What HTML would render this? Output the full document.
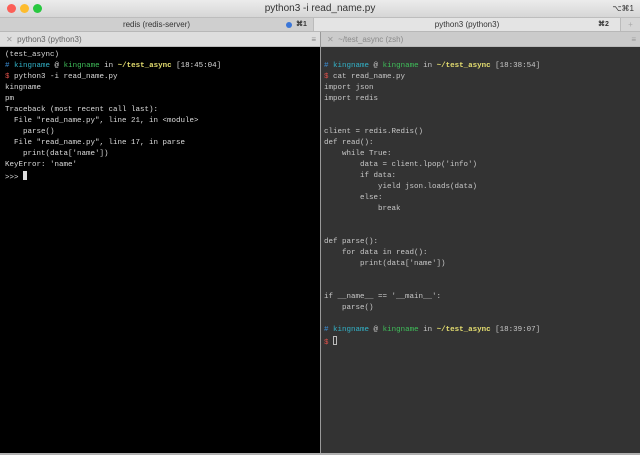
<!DOCTYPE html>
<html><head><style>
*{margin:0;padding:0;box-sizing:border-box}
body{width:640px;height:455px;overflow:hidden;background:#c8c8c8;font-family:"Liberation Sans",sans-serif;position:relative}
.title{position:absolute;left:0;top:0;width:640px;height:17px;background:linear-gradient(#ececec,#d6d6d6);font-size:10px;color:#333;text-align:center;line-height:17px}
.dot{position:absolute;top:4px;width:9px;height:9px;border-radius:50%}
.tabs{position:absolute;top:17px;left:0;width:640px;height:15px;background:#d3d3d3;border-top:1px solid #bdbdbd;border-bottom:1px solid #b8b8b8;font-size:8px;color:#333;line-height:13px}
.tab{position:absolute;top:0;height:13px;text-align:center}
.ph{position:absolute;top:32px;height:15px;background:#dadada;font-size:8px;line-height:15px;color:#666;border-bottom:1px solid #bbb}
.pane{position:absolute;top:47px;height:406px;font-family:"Liberation Mono",monospace;font-size:7.5px;line-height:11px;white-space:pre;padding:3px 0 0 5px}
.l{background:#000;color:#dcdcdc;left:0;width:320px}
.r{background:#333;color:#c8c8c8;left:321px;width:319px;padding-left:3px}
.b{color:#3b8fd6}.c{color:#32b3c9}.g{color:#3fbf5a}.y{color:#e6df70;font-weight:bold}.rd{color:#e0504a}
.cur{display:inline-block;width:4px;height:9px;background:#ddd;vertical-align:-1px}
</style></head><body>
<div class="title">python3 -i read_name.py
<div class="dot" style="left:7px;background:#fc5f57"></div><div class="dot" style="left:20px;background:#fdbc2e"></div><div class="dot" style="left:33px;background:#28c840"></div>
<span style="position:absolute;right:6px;top:0;font-size:8px">⌥⌘1</span></div>
<div class="tabs">
<div class="tab" style="left:0;width:313px;background:#cfcfcf">redis (redis-server)<span style="position:absolute;left:286px;top:4px;width:6px;height:6px;border-radius:50%;background:#3a76d8"></span><span style="position:absolute;left:296px;font-weight:bold;font-size:7px">⌘1</span></div>
<div class="tab" style="left:313px;width:307px;background:#e4e4e4;border-left:1px solid #bbb">python3 (python3)<span style="position:absolute;left:284px;font-weight:bold;font-size:7px">⌘2</span></div>
<div class="tab" style="left:620px;width:20px;background:#d6d6d6;color:#aaa;border-left:1px solid #bbb">+</div>
</div>
<div class="ph" style="left:0;width:320px;background:#dedede"><span style="margin-left:6px;color:#999">✕</span>&nbsp;&nbsp;python3 (python3)<span style="position:absolute;right:4px;color:#888">≡</span></div>
<div class="ph" style="left:321px;width:319px;background:#cbcbcb;color:#8a8a8a"><span style="margin-left:6px;color:#999">✕</span>&nbsp;&nbsp;~/test_async (zsh)<span style="position:absolute;right:4px;color:#999">≡</span></div>
<div style="position:absolute;left:320px;top:32px;width:1px;height:423px;background:#999"></div>
<div class="pane l">(test_async)
<span class="b">#</span> <span class="c">kingname</span> @ <span class="g">kingname</span> in <span class="y">~/test_async</span> [18:45:04]
<span class="rd">$</span> python3 -i read_name.py
kingname
pm
Traceback (most recent call last):
  File "read_name.py", line 21, in &lt;module&gt;
    parse()
  File "read_name.py", line 17, in parse
    print(data['name'])
KeyError: 'name'
&gt;&gt;&gt; <span class="cur"></span></div>
<div class="pane r">
<span class="b">#</span> <span class="c">kingname</span> @ <span class="g">kingname</span> in <span class="y">~/test_async</span> [18:38:54]
<span class="rd">$</span> cat read_name.py
import json
import redis


client = redis.Redis()
def read():
    while True:
        data = client.lpop('info')
        if data:
            yield json.loads(data)
        else:
            break


def parse():
    for data in read():
        print(data['name'])


if __name__ == '__main__':
    parse()

<span class="b">#</span> <span class="c">kingname</span> @ <span class="g">kingname</span> in <span class="y">~/test_async</span> [18:39:07]
<span class="rd">$</span> <span class="cur" style="background:none;border:1px solid #bbb"></span></div>
<div style="position:absolute;left:0;top:453px;width:640px;height:2px;background:#b0b0b0"></div>
</body></html>
